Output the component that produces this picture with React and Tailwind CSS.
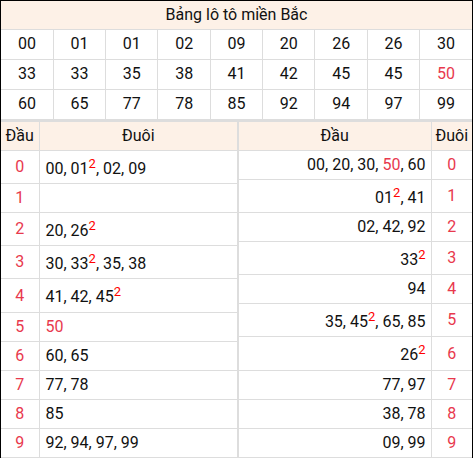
import React from 'react';

const grid = [
  ['00', '01', '01', '02', '09', '20', '26', '26', '30'],
  ['33', '33', '35', '38', '41', '42', '45', '45', '50'],
  ['60', '65', '77', '78', '85', '92', '94', '97', '99'],
];

// each item: [number, count]
const dau = [
  [['00', 1], ['01', 2], ['02', 1], ['09', 1]],
  [],
  [['20', 1], ['26', 2]],
  [['30', 1], ['33', 2], ['35', 1], ['38', 1]],
  [['41', 1], ['42', 1], ['45', 2]],
  [['50', 1]],
  [['60', 1], ['65', 1]],
  [['77', 1], ['78', 1]],
  [['85', 1]],
  [['92', 1], ['94', 1], ['97', 1], ['99', 1]],
];

const duoi = [
  [['00', 1], ['20', 1], ['30', 1], ['50', 1], ['60', 1]],
  [['01', 2], ['41', 1]],
  [['02', 1], ['42', 1], ['92', 1]],
  [['33', 2]],
  [['94', 1]],
  [['35', 1], ['45', 2], ['65', 1], ['85', 1]],
  [['26', 2]],
  [['77', 1], ['97', 1]],
  [['38', 1], ['78', 1]],
  [['09', 1], ['99', 1]],
];

function Nums({ items }) {
  return items.map(([n, c], i) => (
    <React.Fragment key={i}>
      {i > 0 && ', '}
      <span className={n === '50' ? 'text-[#e8394d]' : ''}>{n}</span>
      {c > 1 && (
        <sup className="static align-super text-[13px] leading-[16px] text-[#ff0000]">{c}</sup>
      )}
    </React.Fragment>
  ));
}

const cell = 'border border-[#dddddd]';
const body = 'h-[28px] py-[5px] leading-[18px]';

export default function App() {
  return (
    <div className="w-[473px] border border-black bg-white text-[16px] text-[#111] font-['Roboto','Liberation_Sans',sans-serif]">
      <table className="w-full border-collapse table-fixed">
        <thead>
          <tr>
            <th colSpan={9} className="h-[28px] bg-[#fdf1e7] font-normal text-center border-b border-[#dddddd]">
              Bảng lô tô miền Bắc
            </th>
          </tr>
        </thead>
        <tbody>
          {grid.map((row, r) => (
            <tr key={r}>
              {row.map((n, i) => (
                <td
                  key={i}
                  className={`${cell} h-[30px] text-center first:border-l-0 last:border-r-0 ${n === '50' ? 'text-[#e8394d]' : ''}`}
                >
                  {n}
                </td>
              ))}
            </tr>
          ))}
        </tbody>
      </table>

      <div className="flex border-t border-[#dddddd]">
        <table className="w-[237px] border-collapse table-fixed">
          <thead>
            <tr className="bg-[#fdf1e7]">
              <th className={`${cell} border-l-0 w-[38px] h-[29px] font-normal text-center`}>Đầu</th>
              <th className={`${cell} h-[29px] font-normal text-center`}>Đuôi</th>
            </tr>
          </thead>
          <tbody>
            {dau.map((items, i) => (
              <tr key={i}>
                <td className={`${cell} ${body} border-l-0 text-center text-[#e8394d]`}>{i}</td>
                <td className={`${cell} ${body} pl-[6px] text-left`}>
                  <Nums items={items} />
                </td>
              </tr>
            ))}
          </tbody>
        </table>
        <table className="flex-1 border-collapse table-fixed">
          <thead>
            <tr className="bg-[#fdf1e7]">
              <th className={`${cell} h-[29px] font-normal text-center`}>Đầu</th>
              <th className={`${cell} border-r-0 w-[41px] h-[29px] font-normal text-center`}>Đuôi</th>
            </tr>
          </thead>
          <tbody>
            {duoi.map((items, i) => (
              <tr key={i}>
                <td className={`${cell} ${body} pr-[5px] text-right`}>
                  <Nums items={items} />
                </td>
                <td className={`${cell} ${body} border-r-0 text-center text-[#e8394d]`}>{i}</td>
              </tr>
            ))}
          </tbody>
        </table>
      </div>
    </div>
  );
}
